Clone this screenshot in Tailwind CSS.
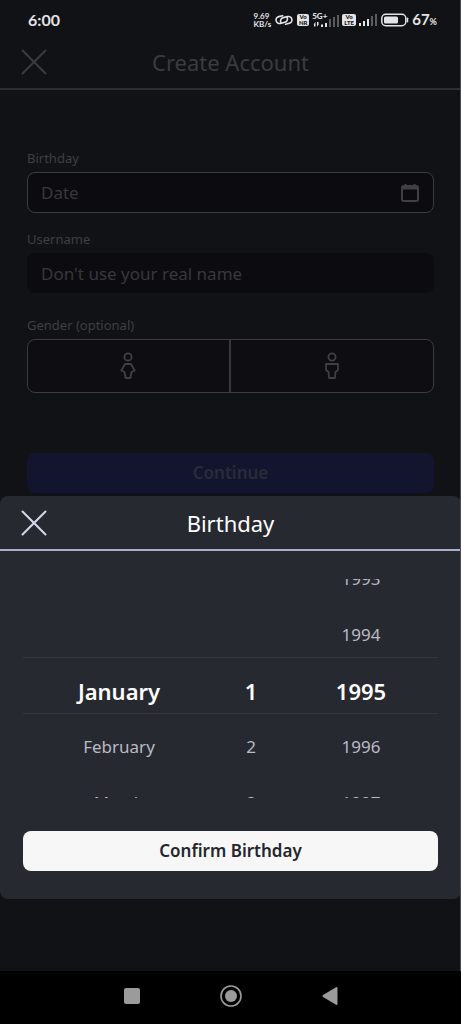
<!DOCTYPE html>
<html lang="en">
<head>
<meta charset="utf-8">
<meta name="viewport" content="width=device-width, initial-scale=1">
<title>Create Account</title>
<script src="https://cdn.jsdelivr.net/npm/@tailwindcss/browser@4"></script>
</head>
<body class="flex min-h-screen flex-col bg-black font-['Noto_Sans',sans-serif] text-white">
<div class="relative flex grow flex-col bg-[#111215]">
  <div class="flex h-10 items-center justify-between pr-6 pl-7 text-[#e4e4e6]">
    <time class="font-['Lato',sans-serif] text-base font-bold">6:00</time>
    <div class="flex items-center gap-[3px]">
      <div class="font-['Lato',sans-serif] text-[8px] leading-2 font-bold"><p>9.69</p><p>KB/s</p></div>
      <svg class="mx-px h-4 w-[18px]" viewBox="0 0 18 16" fill="none" stroke="currentColor" stroke-width="1.600" stroke-linecap="round"><rect x="1" y="4" width="11.500" height="7" rx="3.500" transform="rotate(-14 6.700 7.500)" stroke-dasharray="25 5" stroke-dashoffset="-9"/><rect x="5.500" y="5" width="11.500" height="7" rx="3.500" transform="rotate(-14 11.200 8.500)" stroke-dasharray="25 5" stroke-dashoffset="6"/></svg>
      <div class="h-3 w-3 rounded-xs bg-[#e4e4e6] text-center font-['Lato',sans-serif] text-[6px] leading-[6px] font-black text-[#111215]"><p>Vo</p><p>NR</p></div>
      <div class="flex h-4 w-[27px] items-end justify-between">
        <div class="h-4 w-4 font-['Lato',sans-serif] text-[8px] leading-2 font-black whitespace-nowrap"><p>5G+</p>
          <svg class="h-2 w-4" viewBox="0 0 16 8" fill="currentColor"><path d="M3.500 2v4.500H2V4L1 5zM5 6.500V2h1.500v2.500l1-1zM9 4.500h2V7H9zM13 3h2v4h-2z"/></svg>
        </div>
        <svg class="h-4 w-[10px]" viewBox="0 0 10 16" fill="currentColor" opacity=".35"><path d="M0 7h2v8H0zM4 5h2v10H4zM8 3h2v12H8z"/></svg>
      </div>
      <div class="h-3 w-[14px] rounded-xs bg-[#e4e4e6] text-center font-['Lato',sans-serif] text-[6px] leading-[6px] font-black text-[#111215]"><p>Vo</p><p>LTE</p></div>
      <svg class="h-4 w-[18px]" viewBox="0 0 18 16" fill="currentColor"><path d="M0 11h2v3H0zM4 9h2v5H4zM8 7h2v7H8z"/><path d="M12 4h2v10h-2zM16 2h2v12h-2z" opacity=".35"/></svg>
      <svg class="ml-px h-4 w-7" viewBox="0 0 28 16"><rect x=".8" y="2.300" width="24" height="11.400" rx="4" fill="none" stroke="currentColor" stroke-width="1.500"/><rect x="3" y="4.500" width="14" height="7" rx="1.500" fill="currentColor"/><path d="M26.500 6.200v3.600" stroke="currentColor" stroke-width="1.500" stroke-linecap="round"/></svg>
      <p class="font-['Lato',sans-serif] text-[15px] leading-4 font-bold">67<span class="text-[9px]">%</span></p>
    </div>
  </div>

  <header class="grid h-[50px] grid-cols-[40px_1fr_40px] items-center border-b-2 border-[#2d2d38] px-[14px] pb-1 text-[#3b3b40]">
    <button type="button" aria-label="Close" class="flex h-10 w-10 items-center justify-center"><svg class="h-[26px] w-[26px]" viewBox="0 0 26 26" stroke="currentColor" stroke-width="2" stroke-linecap="round"><path d="M1.500 1.500l23 23M24.500 1.500l-23 23"/></svg></button>
    <h1 class="text-center text-[22px] leading-7">Create Account</h1>
  </header>

  <form class="flex flex-col px-[27px] pt-[58px] text-[#3f3f44]">
    <label for="date" class="h-6 text-[13px] leading-5">Birthday</label>
    <div class="flex h-[41px] items-center rounded-lg border border-[#3b3b40] bg-[#0c0b10] px-[13px]">
      <input id="date" placeholder="Date" readonly class="w-full min-w-0 grow bg-transparent text-[17px] outline-none placeholder:text-[#38383d]">
      <svg class="h-5 w-5 shrink-0" viewBox="0 0 20 20" fill="none" stroke="currentColor" stroke-width="2"><rect x="2" y="3" width="16" height="15" rx="1.500"/><path d="M2 5h16" stroke-width="3"/><path d="M5.500 1v3M14.500 1v3"/></svg>
    </div>
    <label for="user" class="mt-4 h-6 text-[13px] leading-5">Username</label>
    <input id="user" placeholder="Don't use your real name" class="h-10 rounded-lg bg-[#0c0b10] px-[14px] text-[17px] outline-none placeholder:text-[#38383d]">
    <fieldset class="mt-[22px]">
      <legend class="h-6 text-[13px] leading-5">Gender (optional)</legend>
      <div class="grid h-[54px] grid-cols-2 divide-x-2 divide-[#38383c] overflow-hidden rounded-lg border border-[#3b3b40] bg-[#0e0d12]">
        <button type="button" aria-label="Female" class="flex items-center justify-center"><svg class="h-7 w-4" viewBox="0 0 16 28" fill="none" stroke="currentColor" stroke-width="1.800" stroke-linejoin="round"><circle cx="8" cy="5" r="3.600"/><path d="M5 12h6l3.700 6.500-3.200 1.500-1 6h-5l-1-6-3.200-1.500z"/></svg></button>
        <button type="button" aria-label="Male" class="flex items-center justify-center"><svg class="h-7 w-4" viewBox="0 0 16 28" fill="none" stroke="currentColor" stroke-width="1.800" stroke-linejoin="round"><circle cx="8" cy="5" r="3.600"/><path d="M2 12h12v6l-2.500 2-.5 6H5l-.5-6L2 18z"/></svg></button>
      </div>
    </fieldset>
    <button type="submit" class="mt-[60px] h-10 rounded-lg bg-[#13152e] text-[17px] font-semibold text-[#292b3b]">Continue</button>
  </form>

  <section role="dialog" aria-labelledby="sheet-title" class="absolute inset-x-0 bottom-[72px] flex flex-col rounded-lg bg-[#272930]">
    <header class="grid h-[55px] grid-cols-[40px_1fr_40px] items-center border-b-2 border-[#a9b0cc] px-[14px]">
      <button type="button" aria-label="Close" class="flex h-10 w-10 items-center justify-center text-[#d5d9ec]"><svg class="h-[26px] w-[26px]" viewBox="0 0 26 26" stroke="currentColor" stroke-width="2" stroke-linecap="round"><path d="M1.500 1.500l23 23M24.500 1.500l-23 23"/></svg></button>
      <h2 id="sheet-title" class="text-center text-[22px] leading-7">Birthday</h2>
    </header>
    <div class="relative mx-[23px] mt-[28px] h-[219px] overflow-hidden">
      <div class="-mt-[28px] grid grid-cols-[192fr_72fr_148fr] pr-[3px] text-center text-[17px] leading-[56px] text-[#b9bac4]">
        <ul aria-label="Month" class="pt-[112px]"><li class="text-[22px] leading-[56px] font-semibold text-white">January</li><li>February</li><li>March</li></ul>
        <ul aria-label="Day" class="pt-[112px]"><li class="text-[22px] leading-[56px] font-semibold text-white">1</li><li>2</li><li>3</li></ul>
        <ul aria-label="Year"><li>1993</li><li>1994</li><li class="text-[22px] leading-[56px] font-semibold text-white">1995</li><li>1996</li><li>1997</li></ul>
      </div>
      <div class="pointer-events-none absolute inset-x-0 top-[78px] h-[57px] border-y border-[#36363c]"></div>
    </div>
    <button type="button" class="mx-[23px] mt-[33px] mb-7 h-10 rounded-lg bg-[#f7f7f7] text-[17px] font-semibold text-[#25262c]">Confirm Birthday</button>
  </section>
  <div class="pointer-events-none absolute inset-y-0 right-0 w-px bg-[#4a4a4e]"></div>
</div>

<nav class="grid h-[53px] shrink-0 grid-cols-[1fr_99px_99px_99px_1fr] items-center bg-black pb-1 text-[#9b9b9b]">
  <button type="button" aria-label="Recent apps" class="col-start-2 flex justify-center"><svg class="h-4 w-4" viewBox="0 0 16 16" fill="currentColor"><rect width="16" height="16" rx="2"/></svg></button>
  <button type="button" aria-label="Home" class="flex justify-center"><svg class="h-[22px] w-[22px]" viewBox="0 0 22 22" fill="currentColor"><circle cx="11" cy="11" r="6"/><circle cx="11" cy="11" r="10" fill="none" stroke="currentColor" stroke-width="1.600"/></svg></button>
  <button type="button" aria-label="Back" class="flex justify-center"><svg class="h-[18px] w-4" viewBox="0 0 16 18" fill="currentColor"><path d="M14 0.300Q15.500-.3 15.500 1v16q0 1.300-1.500.7L1 10Q0 9 1 8z"/></svg></button>
</nav>
</body>
</html>
